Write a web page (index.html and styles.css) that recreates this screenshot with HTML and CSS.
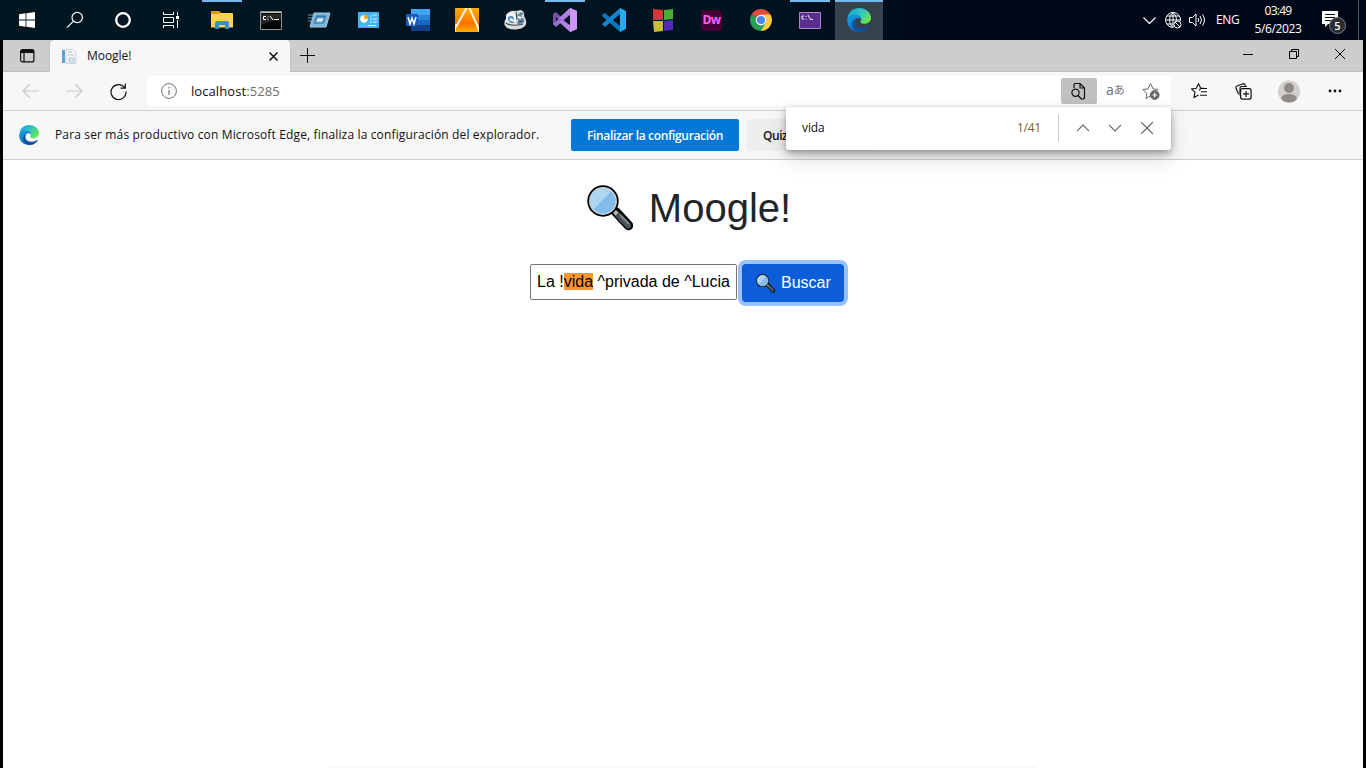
FILE: index.html
```html
<!DOCTYPE html>
<html lang="es">
<head>
<meta charset="utf-8">
<title>Moogle!</title>
<link rel="stylesheet" href="styles.css">
</head>
<body>
<svg class="defs" width="0" height="0">
  <defs>
    <linearGradient id="edgeGreen" x1="0" y1="0" x2="1" y2=".6"><stop offset="0" stop-color="#179bdc"/><stop offset=".55" stop-color="#2fc4c0"/><stop offset="1" stop-color="#6ae552"/></linearGradient>
    <linearGradient id="edgeBlue" x1="0" y1="0" x2=".5" y2="1"><stop offset="0" stop-color="#16a2e2"/><stop offset="1" stop-color="#0d6bc5"/></linearGradient>
    <linearGradient id="gold" x1="0" y1="0" x2="0" y2="1"><stop offset="0" stop-color="#ffac08"/><stop offset=".65" stop-color="#ff7200"/><stop offset="1" stop-color="#ffb000"/></linearGradient>
    <symbol id="edge" viewBox="0 0 24 24">
      <path d="M.5 10C1.5 3.500 6.500 0 12 0c7 0 12 4.700 12 9.800 0 4-3.500 6-7 6-3 0-4-1.300-3.400-2.300C15.500 10 12 7 8 7c-4 0-6.500 1.500-7.500 3z" fill="url(#edgeGreen)"/>
      <path d="M.2 12C.5 8 4 6 8 6.200c4.500.2 7 3 6.500 5.800-.2-1-1.500-2-3-2-3 0-4.500 3-3.500 6 1 3.500 4 6 7 7C7 26 0 20 .2 12z" fill="url(#edgeBlue)"/>
      <path d="M9.500 10.500C6.500 12 6.500 17 10 19c4 2.300 9 1 11.700-.9.700-.4 1 .1.600.7C20 22.300 16 24.300 12 24c-4-.5-7-4-7-8 0-3 2-5 4.500-5.500z" fill="#134f9c"/>
    </symbol>
    <symbol id="lens" viewBox="0 0 46 46">
      <path d="M29 27l12.500 13.500" stroke="#000" stroke-width="9.500" stroke-linecap="round"/>
      <path d="M31 30l10 10.500" stroke="#475154" stroke-width="6" stroke-linecap="round"/>
      <path d="M33 30l9 9" stroke="#7e878b" stroke-width="2"/>
      <path d="M25 24l5 5" stroke="#b8bfc3" stroke-width="4"/>
      <circle cx="16" cy="16" r="15.700" fill="#000"/>
      <circle cx="16" cy="16" r="13.200" fill="#83bbea" stroke="#ccd1d5" stroke-width="1.500"/>
      <path d="M4 20A12.500 12.500 0 0 1 24 6.500L7 24a12 12 0 0 1-3-4z" fill="#add6f1"/>
    </symbol>
  </defs>
</svg>
<div class="screen">
  <header class="taskbar">
    <div class="system">
      <span class="slot"><svg width="16" height="16" viewBox="0 0 16 16" fill="#fff"><path d="M0 2.200l6.600-.9v6.300H0zM7.400 1.200L16 0v7.600H7.400zM0 8.400h6.600v6.300L0 13.800zM7.400 8.400H16V16l-8.600-1.200z"/></svg></span>
      <span class="slot"><svg width="18" height="18" viewBox="0 0 18 18" fill="none" stroke="#fff" stroke-width="1.200"><circle cx="11.200" cy="6.500" r="5.200"/><path d="M7.500 10.200L1 16.700"/></svg></span>
      <span class="slot"><svg width="16" height="16" viewBox="0 0 16 16"><circle cx="8" cy="8" r="6.800" fill="none" stroke="#fff" stroke-width="2.300"/></svg></span>
      <span class="slot"><svg width="18" height="16" viewBox="0 0 18 16" fill="none" stroke="#fff"><path d="M1.500 0v2.500h10V0M1.500 16v-2.500h10V16M1.500 5.500h10v5h-10zM15.500 0v3.500M15.500 8v8"/><path d="M14 4h3v3h-3z" fill="#fff" stroke="none"/></svg></span>
    </div>
    <div class="apps">
      <span class="slot open"><svg width="22" height="18" viewBox="0 0 22 18"><path d="M0 1q0-1 1-1h7l2 2h11q1 0 1 1v13.500H0z" fill="#ffd15b"/><path d="M0 0h8l1.500 2L8 3H0z" fill="#dd9804"/><path d="M4 18v-6q0-2 2-2h10q2 0 2 2v6h-4v-4H8v4z" fill="#368fd8"/></svg></span>
      <span class="slot"><svg width="22" height="19" viewBox="0 0 22 19"><path d="M.5.500h21v18H.5z" fill="#050505" stroke="#929292"/><path d="M1 1h20v1H1z" fill="#c7c7c7"/><path d="M1 3h20v6Q8 10 1 14z" fill="#272727"/><path d="M6 5.500H3.500v3H6M8 5.500v1M8 8v1M10 5l3 4M14 8.500h5" stroke="#fff" fill="none"/></svg></span>
      <span class="slot"><svg width="23" height="16" viewBox="0 0 23 16"><path d="M6 1h16l-4 14H2z" fill="#78afd2" stroke="#a3cfe6"/><path d="M8 3h11l-3 9H5z" fill="#387aae" stroke="#9bcbe7" stroke-width=".6"/><path d="M9.500 6h6l-1.200 4H8z" fill="#dceefa" stroke="#82bde1"/><path d="M0 3h5M0 6h4M0 9h4" stroke="#6a9bbb"/></svg></span>
      <span class="slot"><svg width="21" height="16" viewBox="0 0 21 16"><rect width="21" height="16" rx="1" fill="#42b3ee"/><circle cx="6" cy="7" r="3.700" fill="#fff"/><path d="M6 7V2.500A4 4 0 0 1 10 7z" fill="#f6a31b"/><path d="M12 4h2M15 3h4M12 7h2M15 7h4M12 10h2M15 10h4" stroke="#e6f7ff" stroke-width="1.200"/><path d="M3 13.500h15" stroke="#fff"/><path d="M3 13.500h7" stroke="#ffa500"/></svg></span>
      <span class="slot"><svg width="24" height="22" viewBox="0 0 24 22"><path d="M5 0h19v6H5z" fill="#42a5ef"/><path d="M5 6h19v5H5z" fill="#2b82d9"/><path d="M5 11h19v5H5z" fill="#1767bd"/><path d="M5 16h19v6H5z" fill="#123f87"/><rect y="5" width="12" height="12" fill="#195abd"/><path d="M2 8l2 7 2-6 2 6 2-7" fill="none" stroke="#fff" stroke-width="1.500"/></svg></span>
      <span class="slot"><svg width="24" height="24" viewBox="0 0 24 24"><path d="M0 0h24v24H0z" fill="url(#gold)"/><path d="M12-1L1 19M14-1l11 25" fill="none" stroke="#fff6df" stroke-width="2"/><path d="M1 16L0 24" stroke="#fff6df"/></svg></span>
      <span class="slot"><svg width="23" height="20" viewBox="0 0 23 20"><path d="M2 5Q5 0 12 1l5-1q4 2 3 6 4 6 1 10-3 3-9 3.500Q3 20 .5 15 0 10 2 9z" fill="#d8dcda"/><circle cx="7.500" cy="8" r="5.500" fill="#eef5fa"/><path d="M4 7q4-3 6 1v5H7Q3 11 4 7z" fill="#5790bb"/><path d="M13 5q4-4 5 1l-2 2q5-1 4 4-3 3-7 2 2-4 0-9z" fill="#668ba7"/><path d="M12 2l1 8M2 13q5 4 17 1M16 3l3 1M14 12l5-1" fill="none" stroke="#3f4b51" stroke-width="1.100"/><path d="M6 9l4 2M14 7l3 1" stroke="#fff" stroke-width="2"/></svg></span>
      <span class="slot open"><svg width="24" height="24" viewBox="0 0 24 24"><path d="M0 6l3-2 15 15v4L3 9v9l-3-2z" fill="#7951aa"/><path d="M0 16L16 1l2 5L3 19z" fill="#986ccc"/><path d="M17 0l7 3v18l-7 3-11-10 3-2 8 5V6L9 12 6 10z" fill="#b080e5"/><path d="M17 0l7 3v18l-7 3z" fill="#cc96f7"/></svg></span>
      <span class="slot"><svg width="24" height="24" viewBox="0 0 24 24"><path d="M1 6l2-1 16 14-1 5L0 8z" fill="#0d76bd"/><path d="M0 16L18 0v6L3 19z" fill="#1485cb"/><path d="M18 0l6 3v18l-6 3z" fill="#29a9ee"/></svg></span>
      <span class="slot"><svg width="22" height="23" viewBox="0 0 22 23"><path d="M1 0l10 1v10H1z" fill="#d83632"/><path d="M12 1l9-1v10l-9 1z" fill="#49ae32"/><path d="M1 12h10v10L2 23z" fill="#c7be36"/><path d="M12 12l9-1v10l-9 1z" fill="#502cb2"/></svg></span>
      <span class="slot"><span class="dw">Dw</span></span>
      <span class="slot"><svg width="22" height="22" viewBox="0 0 22 22"><path d="M11 11L1.500 5.500A11 11 0 0 1 20.500 5.500z" fill="#e24b3d"/><path d="M11 11V5.500h9.500A11 11 0 0 1 11 22z" fill="#fbcd3e"/><path d="M11 11l4.800 2.800L11 22A11 11 0 0 1 1.500 5.500z" fill="#27a052"/><circle cx="11" cy="11" r="5.300" fill="#fff"/><circle cx="11" cy="11" r="4.100" fill="#4688f1"/></svg></span>
      <span class="slot open"><svg width="22" height="17" viewBox="0 0 22 17"><path d="M.5.500h21v16H.5z" fill="#5c2d91" stroke="#a78cc1"/><path d="M5 4H3v3h2M7 4v1M7 7v1M9 3l2 4M11 7.500h3" fill="none" stroke="#eee"/></svg></span>
      <span class="slot open active"><svg width="24" height="24"><use href="#edge"/></svg></span>
    </div>
    <div class="tray">
      <svg width="13" height="7" viewBox="0 0 13 7" fill="none" stroke="#fff" stroke-width="1.200"><path d="M.5.500l6 6 6-6"/></svg>
      <svg class="globe" width="17" height="17" viewBox="0 0 17 17" fill="none" stroke="#fff"><path d="M15.500 9A7.500 7.500 0 1 0 8 15.500M8 .5v15M.5 8h15M2 4h12M2 12h6M8 .5C3.500 4 3.500 12 8 15.500M8 .5c3 3 3.500 5 3.500 8"/><circle cx="12.500" cy="12.500" r="3.500" fill="#00091a"/><path d="M10 10l5 5"/></svg>
      <svg class="speaker" width="17" height="14" viewBox="0 0 17 14" fill="none" stroke="#fff"><path d="M.5 4.500h3L7 1v12L3.500 9.500h-3zM9 5q1.500 2 0 4M11 3q3 4 0 8M13.500 1.500q4 5.500 0 11"/></svg>
      <span class="lang">ENG</span>
      <span class="clock"><span class="time">03:49</span><span class="date">5/6/2023</span></span>
      <span class="notice"><svg width="16" height="16" viewBox="0 0 16 16"><path d="M0 0h16v13H6l-3 3v-3H0z" fill="#fff"/><path d="M3 3.500h10M3 6.500h10M3 9.500h7" stroke="#000817"/></svg><span class="count">5</span></span>
      <span class="desktop-edge"></span>
    </div>
  </header>
  <main class="browser">
    <div class="tabs">
      <div class="tab-menu"><svg width="15" height="14" viewBox="0 0 15 14" fill="none" stroke="#111" stroke-width="1.200"><rect x=".6" y=".6" width="13.300" height="12.300" rx="2"/><path d="M4 4v9" /><path d="M1 1h13v3H1z" fill="#111" stroke="none"/></svg></div>
      <div class="tab">
        <svg width="16" height="15" viewBox="0 0 16 15"><path d="M1 1h3v13H1z" fill="#5da3d0"/><path d="M5 .5h7l3 3v11H5z" fill="#f4f6f9" stroke="#ccd2da"/><path d="M7 3h4M7 6h6M8 9h5v4H8z" stroke="#b6bfc9" fill="#e2e7ef"/></svg>
        <span class="tab-title">Moogle!</span>
        <svg width="9" height="9" viewBox="0 0 9 9" stroke="#111" stroke-width="1.500"><path d="M.5.500l8 8M8.500.500l-8 8"/></svg>
      </div>
      <svg class="plus" width="15" height="15" viewBox="0 0 15 15" stroke="#111"><path d="M0 7.500h15M7.500 0v15"/></svg>
      <div class="window-controls">
        <svg width="10" height="10" viewBox="0 0 10 10" stroke="#000"><path d="M0 5.500h10"/></svg>
        <svg width="10" height="10" viewBox="0 0 10 10" fill="none" stroke="#000"><path d="M.5 2.500h7v7h-7zM2.500 2V.5h7v7H8"/></svg>
        <svg width="10" height="10" viewBox="0 0 10 10" stroke="#000"><path d="M0 0l10 10M10 0L0 10"/></svg>
      </div>
    </div>
    <div class="toolbar">
      <div class="nav">
        <svg width="17" height="14" viewBox="0 0 17 14" fill="none" stroke="#c8c8c8" stroke-width="1.200"><path d="M17 7H1M7.500.500L1 7l6.500 6.500"/></svg>
        <svg width="17" height="14" viewBox="0 0 17 14" fill="none" stroke="#c8c8c8" stroke-width="1.200"><path d="M0 7h16M9.500.500L16 7l-6.500 6.500"/></svg>
        <svg width="17" height="17" viewBox="0 0 17 17" fill="none" stroke="#111" stroke-width="1.200"><path d="M14.800 5A7.500 7.500 0 1 0 16 8.500M15.300.5v4.600h-4.800"/></svg>
      </div>
      <div class="address">
        <svg width="16" height="16" viewBox="0 0 16 16" fill="none" stroke="#707070"><circle cx="8" cy="8" r="7.400"/><path d="M8 7v5M8 4v1.500" stroke-width="1.200"/></svg>
        <span class="url">localhost<span class="port">:5285</span></span>
        <div class="address-actions">
          <span class="find-button"><svg width="16" height="17" viewBox="0 0 16 17" fill="none" stroke="#111" stroke-width="1.200"><path d="M3 5V2q0-1.500 1.500-1.500H9L13.500 5v9q0 2-2 2M9 .5V5h4.500"/><circle cx="4.500" cy="9.700" r="3.600"/><path d="M7 12.500l4 4"/></svg></span>
          <span class="translate">a<span class="kana">あ</span></span>
          <svg class="favorite" width="18" height="18" viewBox="0 0 18 18" fill="none" stroke="#686868"><path d="M8.300 14L4 16.500l.8-5L1 7.500l5-.7L8.500 1.500 11 6.800l5 .7-1 1"/><circle cx="12.700" cy="13" r="4.400" fill="#686868"/><path d="M10.500 13h4.400M12.700 10.800v4.400" stroke="#fff" stroke-width="1.200"/></svg>
        </div>
      </div>
      <div class="browser-actions">
        <svg width="17" height="16" viewBox="0 0 17 16" fill="none" stroke="#111" stroke-width="1.100"><path d="M7.500 12L3 14.500l1-5.300L.6 6l4.700-.8L7.500.8l2.200 4.400H13M10 5.500h6M10 8.800h6M9 12.200h7M9.500 5l-1 2.500"/></svg>
        <svg width="17" height="17" viewBox="0 0 17 17" fill="none" stroke="#111" stroke-width="1.200"><path d="M3.500 11L1 5Q.6 3.500 2 3L8 .8q1.500-.4 2 1l.5 1"/><path d="M5 12.500V5.500q0-2 2-2h5"/><rect x="5.600" y="5.600" width="10.500" height="10.500" rx="2" fill="#f7f7f7"/><path d="M8 10.900h6M11 8v6"/></svg>
        <svg width="22" height="23" viewBox="0 0 22 23"><circle cx="11" cy="11.500" r="11" fill="#d1cfcc"/><circle cx="11" cy="8" r="5" fill="#8e8a87"/><path d="M3 19q1-5 8-5t8 5q-3 3.500-8 3.500T3 19z" fill="#8e8a87"/></svg>
        <svg width="14" height="4" viewBox="0 0 14 4" fill="#111"><circle cx="2" cy="2" r="1.400"/><circle cx="7" cy="2" r="1.400"/><circle cx="12" cy="2" r="1.400"/></svg>
      </div>
    </div>
    <div class="notification">
      <svg width="20" height="20"><use href="#edge"/></svg>
      <span class="message">Para ser más productivo con Microsoft Edge, finaliza la configuración del explorador.</span>
      <button class="finish">Finalizar la configuración</button>
      <button class="later">Quiz</button>
    </div>
    <section class="page">
      <h1><svg width="46" height="46"><use href="#lens"/></svg><span>Moogle!</span></h1>
      <form class="search">
        <div class="query">La !<mark>vida</mark> ^privada de ^Lucia</div>
        <button class="submit" type="button"><svg width="19" height="19"><use href="#lens"/></svg><span>Buscar</span></button>
      </form>
    </section>
    <div class="bottom-edge"></div>
    <aside class="find">
      <span class="find-query">vida</span><span class="matches">1/41</span><span class="separator"></span>
      <svg width="12" height="8" viewBox="0 0 12 8" fill="none" stroke="#666" stroke-width="1.100"><path d="M0 7l6-6 6 6"/></svg>
      <svg width="12" height="8" viewBox="0 0 12 8" fill="none" stroke="#666" stroke-width="1.100"><path d="M0 1l6 6 6-6"/></svg>
      <svg width="12" height="12" viewBox="0 0 12 12" stroke="#555" stroke-width="1.100"><path d="M0 0l12 12M12 0L0 12"/></svg>
    </aside>
  </main>
</div>
</body>
</html>
```

FILE: styles.css
```css
* { box-sizing: border-box; }
body { margin: 0; background: #000; overflow: hidden; font-family: "Open Sans", "Noto Sans", sans-serif; font-size: 12px; color: #111; }
svg { display: block; flex: none; }
button { border: 0; font: inherit; white-space: nowrap; }
.defs { position: absolute; }
.screen { width: 1366px; height: 768px; display: flex; flex-direction: column; }
.taskbar { height: 40px; flex: none; padding-left: 3px; display: flex; color: #fff; background: linear-gradient(90deg, #001722, #001320 55%, #00091a 68%, #000818); }
.system { display: flex; }
.apps { display: flex; gap: 1px; margin-left: 2px; }
.slot { width: 48px; height: 40px; display: flex; align-items: center; justify-content: center; }
.apps .slot { padding-right: 1px; }
.apps { margin-left: 3px; }
.open { background: linear-gradient(#76b9ed, #76b9ed) center top / 40px 2px no-repeat; }
.active { background: linear-gradient(#76b9ed, #76b9ed) center top / 48px 2px no-repeat #35414c; }
.dw { width: 21px; height: 21px; border-radius: 4px; background: #470137; color: #ff61f6; font: bold 12px/20px "Open Sans", sans-serif; letter-spacing: -.7px; text-align: center; }
.tray { flex: 1; display: flex; align-items: center; padding-left: 260px; }
.globe { margin-left: 9px; }
.speaker { margin-left: 7px; }
.lang { width: 24px; margin: -2px 0 0 10px; letter-spacing: -.4px; }
.clock { display: flex; flex-direction: column; align-items: center; width: 52px; margin-left: 12px; line-height: 18px; height: 36px; letter-spacing: -.75px; }
.date { letter-spacing: -.4px; }
.notice { position: relative; margin-left: 18px; margin-top: -2px; }
.count { position: absolute; left: 7px; top: 6px; width: 17px; height: 17px; border: 1px solid #7a7d80; border-radius: 50%; background: #292c32; font-size: 11px; font-weight: 600; line-height: 15px; text-align: center; }
.desktop-edge { width: 1px; height: 40px; background: #4b5059; margin-left: 20px; }
.browser { position: relative; flex: 1; margin: 0 3px; background: #fff; display: flex; flex-direction: column; overflow: hidden; }
.tabs { height: 32px; flex: none; display: flex; background: #cdcdcd; box-shadow: inset 0 -1px #bdbdbd; }
.tab-menu { width: 47px; display: grid; place-items: center; border-bottom-right-radius: 4px; }
.tab-menu svg { margin-left: 1px; }
.tab { width: 240px; height: 32px; padding: 0 12px 0 11px; display: flex; align-items: center; background: #f7f7f7; border-radius: 4px 4px 0 0; box-shadow: 0 0 1px #888; clip-path: inset(0 -2px 0 -2px); }
.tab-title { flex: 1; margin: -2px 0 0 10px; letter-spacing: -.05px; }
.plus { margin: 8px 0 0 10px; }
.window-controls { flex: 1; display: flex; justify-content: flex-end; gap: 36px; padding: 9px 18px 0 0; }
.toolbar { height: 39px; flex: none; border-bottom: 1px solid #cfcfcf; display: flex; align-items: center; background: #f7f7f7; }
.nav { width: 144px; display: flex; gap: 27px; padding-left: 19px; align-items: center; }
.address { width: 1024px; height: 30px; background: #fff; border-radius: 4px; display: flex; align-items: center; padding-left: 14px; }
.url { margin-left: 14px; font-size: 13px; letter-spacing: .08px; }
.port { color: #707070; }
.address-actions { margin-left: auto; display: flex; align-items: center; padding-right: 11px; }
.find-button { width: 36px; height: 26px; background: #c1c1c1; border-radius: 2px; display: grid; place-items: center; }
.translate { color: #707070; font-size: 14px; line-height: 20px; width: 20px; margin: -3px 0 0 9px; white-space: nowrap; }
.kana { font: 11px/1 "Noto Sans CJK JP", sans-serif; position: relative; top: -1px; }
.favorite { margin-left: 16px; }
.browser-actions { display: flex; align-items: center; padding-left: 20px; }
.browser-actions svg:nth-child(2) { margin-left: 27px; }
.browser-actions svg:nth-child(3) { margin-left: 26px; }
.browser-actions svg:nth-child(4) { margin-left: 28px; }
.notification { height: 49px; flex: none; display: flex; align-items: center; padding-left: 16px; background: #f7f7f7; border-bottom: 1px solid #cfcfcf; }
.message { width: 532px; padding: 0 0 2px 16px; white-space: nowrap; letter-spacing: .145px; }
.finish { width: 168px; height: 32px; background: #0078d7; color: #fff; border-radius: 2px; padding: 0; font-weight: 600; letter-spacing: -.33px; }
.later { width: 128px; height: 32px; background: #eee; color: #111; margin-left: 8px; padding: 0 16px; border-radius: 2px; font-weight: 600; letter-spacing: -.45px; text-align: left; }
.page { flex: 1; display: flex; flex-direction: column; align-items: center; padding: 24px 0 0 15px; font-family: "Liberation Sans", Arial, sans-serif; }
h1 { display: flex; align-items: center; gap: 16px; height: 48px; margin: 0; padding-right: 3px; font-size: 40px; font-weight: 400; line-height: 48px; color: #212529; }
.search { display: flex; align-items: center; gap: 5px; margin: 32px 7px 0 0; }
.query { width: 207px; height: 36px; margin-bottom: 2px; border: 1px solid #767676; border-radius: 2px; font-size: 16px; line-height: 34px; padding-left: 6px; white-space: nowrap; color: #000; }
mark { background: #ff9632; color: #000; }
.submit { width: 102px; height: 38px; padding: 0 0 0 14px; display: flex; align-items: center; gap: 6px; background: #0b5ed7; color: #fff; border-radius: 4px; box-shadow: 0 0 0 4px #98c1fe; font-size: 16px; }
.bottom-edge { position: absolute; left: 325px; bottom: 0; width: 709px; height: 2px; background: #f8f8f8; border-radius: 3px 3px 0 0; }
.find { position: absolute; left: 783px; top: 67px; width: 385px; height: 43px; padding: 0 0 2px 16px; display: flex; align-items: center; background: #fff; border-radius: 3px; box-shadow: 0 3px 7px rgba(0,0,0,.34), 0 9px 22px rgba(0,0,0,.14); }
.find-query { width: 215px; letter-spacing: -.1px; }
.matches { width: 24px; color: #795c36; letter-spacing: -.25px; }
.separator { width: 1px; height: 28px; background: #d0d0d0; margin: 0 18px 0 17px; }
.find svg + svg { margin-left: 20px; }
```
